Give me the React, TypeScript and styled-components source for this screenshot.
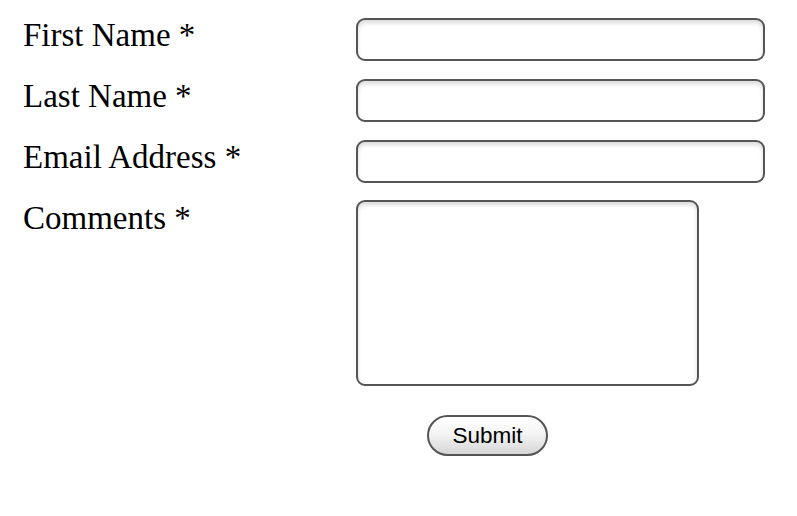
import React from "react";
import styled, { createGlobalStyle } from "styled-components";

const Global = createGlobalStyle`
  html, body { margin: 0; padding: 0; background: #fff; }
  body { font-family: "Liberation Serif", "Times New Roman", serif; }
`;

const Form = styled.form`
  display: grid;
  grid-template-columns: 333px 409px;
  row-gap: 18px;
  padding: 18px 0 0 23px;
`;

const Label = styled.label`
  font-family: "Liberation Serif", "Times New Roman", serif;
  font-size: 33px;
  line-height: 38px;
  color: #000;
  margin-top: -2px;
  align-self: start;
`;

const fieldBase = `
  box-sizing: border-box;
  border: 2px solid #555;
  border-radius: 9px;
  background: #fff;
  box-shadow: inset 0 3px 4px rgba(0, 0, 0, 0.14);
  outline: none;
  margin: 0;
  padding: 4px 8px;
  font-family: "Liberation Sans", Arial, sans-serif;
  font-size: 16px;
`;

const TextInput = styled.input`
  ${fieldBase}
  width: 409px;
  height: 43px;
`;

const TextArea = styled.textarea`
  ${fieldBase}
  width: 343px;
  height: 186px;
  resize: none;
  margin-top: -1px;
`;

const Actions = styled.div`
  grid-column: 2;
  padding-left: 71px;
  margin-top: 11px;
`;

const Submit = styled.button`
  box-sizing: border-box;
  width: 121px;
  height: 41px;
  border: 2px solid #555;
  border-radius: 21px;
  background: linear-gradient(#ffffff 0%, #f4f4f4 45%, #d6d6d6 100%);
  font-family: "Liberation Sans", Arial, sans-serif;
  font-size: 22.5px;
  color: #000;
  padding: 0;
  cursor: pointer;
`;

export default function App() {
  return (
    <>
      <Global />
      <Form onSubmit={(e) => e.preventDefault()}>
        <Label htmlFor="fn">First Name *</Label>
        <TextInput id="fn" type="text" />
        <Label htmlFor="ln">Last Name *</Label>
        <TextInput id="ln" type="text" />
        <Label htmlFor="em">Email Address *</Label>
        <TextInput id="em" type="text" />
        <Label htmlFor="cm">Comments *</Label>
        <TextArea id="cm" />
        <Actions>
          <Submit type="submit">Submit</Submit>
        </Actions>
      </Form>
    </>
  );
}
